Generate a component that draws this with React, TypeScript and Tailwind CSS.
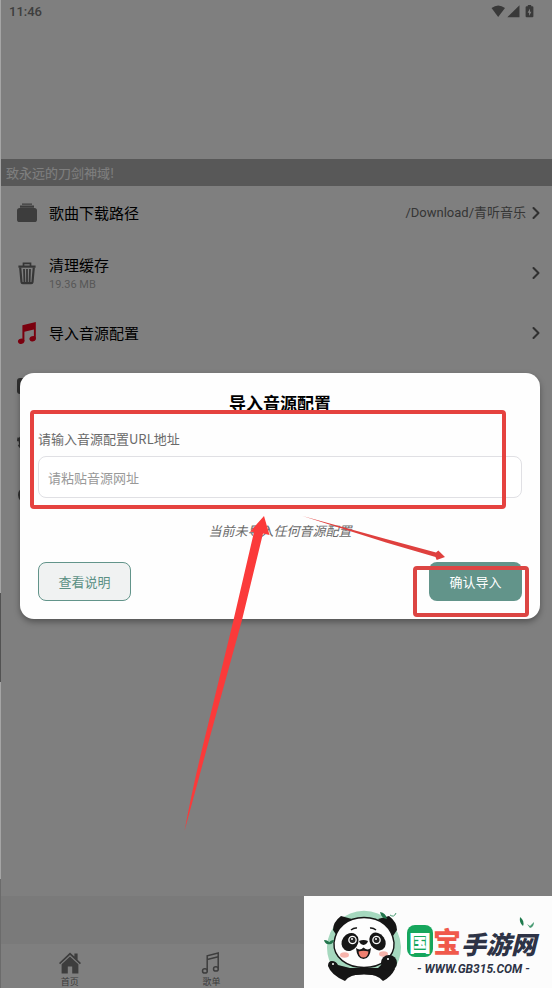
import React, { useState } from "react";
import { ChevronRight } from "lucide-react";

const FolderIcon = () => (
  <svg viewBox="0 0 20 20" className="h-5 w-5" fill="#7a7a7a">
    <path d="M5 .6h10v1.200H5zM3 2.600h14v2.200H3z" />
    <rect x="0" y="5" width="20" height="14" rx="2.600" />
  </svg>
);

const TrashIcon = () => (
  <svg viewBox="0 0 20 24" className="h-6 w-5" fill="none" stroke="#6c6c6c">
    <path d="M1.4 5.6h17.2" strokeWidth="2.2" />
    <path d="M6.5 5V2.4h7V5" strokeWidth="1.7" />
    <path d="M3.2 6.5 4.5 21.2q.1 1 1.2 1h8.6q1.1 0 1.2-1L16.8 6.5" strokeWidth="2.2" />
    <path d="M7 8l.4 13M10 8v13M13 8l-.4 13" strokeWidth="1.8" />
  </svg>
);

const ImportIcon = () => (
  <svg viewBox="0 0 20 24" className="h-6 w-5" fill="#f5001d">
    <path fillRule="evenodd" d="M5.400 4.200 18.800 1V17.400h-1.900V8.600L7.400 10.800V20H5.400z" />
    <ellipse cx="4.2" cy="20.2" rx="3.3" ry="2.6" transform="rotate(-18 4.2 20.2)" />
    <ellipse cx="15.7" cy="17.8" rx="3.3" ry="2.6" transform="rotate(-18 15.7 17.8)" />
  </svg>
);

const CardIcon = () => (
  <svg viewBox="0 0 20 20" className="h-5 w-5" fill="#606060">
    <rect x="0" y="1" width="20" height="16" rx="3" />
  </svg>
);

const GearIcon = () => (
  <svg viewBox="0 0 20 20" className="h-5 w-5" fill="none" stroke="#606060">
    <circle cx="10" cy="10" r="7" strokeWidth="3" />
    <circle cx="10" cy="10" r="8.5" strokeWidth="3" strokeDasharray="3.3 3.3" />
  </svg>
);

const AboutIcon = () => (
  <svg viewBox="0 0 20 20" className="h-5 w-5" fill="#606060">
    <circle cx="10" cy="10" r="9" />
  </svg>
);

const HomeIcon = () => (
  <svg viewBox="0 0 24 24" className="h-6 w-6 shrink-0" fill="#7a7a7a">
    <path d="M12 1.400 1 12l1.100 1.200L12 3.900l9.900 9.300L23 12l-3.400-3.300V2.600h-3.200v3z" />
    <path d="M12 5.400 3.600 13.200V22.400h6.200v-7h4.400v7h6.200v-9.200z" />
  </svg>
);

const SongsIcon = () => (
  <svg viewBox="0 0 24 24" className="h-6 w-6 shrink-0" fill="none" stroke="#7a7a7a" strokeWidth="1.5">
    <path d="M7.200 19.400V4.800L18.200 2V17.400M7.200 8.600 18.200 5.800" />
    <ellipse cx="4.900" cy="19.900" rx="2.400" ry="2.200" />
    <ellipse cx="15.900" cy="17.900" rx="2.400" ry="2.200" />
  </svg>
);

const rows = [
  { id: "path", title: "歌曲下载路径", value: "/Download/青听音乐", icon: FolderIcon, height: "h-[54px]" },
  { id: "cache", title: "清理缓存", sub: "19.36 MB", icon: TrashIcon, height: "h-[66px]" },
  { id: "import", title: "导入音源配置", icon: ImportIcon, height: "h-[54px]" },
  { id: "card", icon: CardIcon, height: "h-[54px]" },
  { id: "settings", icon: GearIcon, height: "h-[54px]" },
  { id: "about", icon: AboutIcon, height: "h-[54px]" },
];

const tabs = [
  { label: "首页", icon: HomeIcon },
  { label: "歌单", icon: SongsIcon },
];

const StatusBar = () => (
  <div className="flex h-6 items-center justify-between pl-2 pr-[18px] text-[#7c7c7c]">
    <span className="font-[Roboto,sans-serif] text-[13px] font-medium leading-6">11:46</span>
    <svg width="43" height="14" viewBox="0 0 43 14" fill="#727272">
      <path d="M.5 3Q7.2-2.2 14 3L7.2 12z" />
      <path d="M28.500.2V12.200H16.300z" />
      <path
        fillRule="evenodd"
        d="M36.800 0h3.400v1.300h1.200q1 0 1 1v9q0 1-1 1h-5.800q-1 0-1-1v-9q0-1 1-1h1.200zM39 3.400 36.600 7.800h1.500v3.200L40.400 6.800h-1.400z"
      />
    </svg>
  </div>
);

const Panda = () => (
  <svg width="82" height="78" viewBox="0 0 82 78" className="shrink-0">
    <path d="M14 66A37 37 0 1 1 70 66z" fill="#a5d8be" />
    <path d="M11 24q0-8 8-14l11 3L15 30zM75 24q0-8-8-14l-11 3 15 17z" fill="#151515" />
    <path d="M6 60q0-5 4-5 4 0 6 4l12 3h28l6-6 11 7q-4 8-12 12-6-7-19-7-14 0-19 7Q9 69 6 60z" fill="#151515" />
    <path
      d="M42 11.500c17 0 28 10 30 25 1 15-13 25-30 25s-31-10-30-25c2-15 13-25 30-25z"
      fill="#fdfdfd"
      stroke="#151515"
      strokeWidth="1.4"
    />
    <path d="M33 65q9-2 18 0 6 1 8 5-17-3-34 0 2-4 8-5z" fill="#151515" />
    <ellipse cx="28" cy="36" rx="8" ry="9.500" fill="#151515" transform="rotate(35 28 36)" />
    <ellipse cx="55.500" cy="35.500" rx="7.500" ry="9.500" fill="#151515" transform="rotate(-35 55.500 35.500)" />
    <circle cx="30.500" cy="34" r="4.300" fill="#fff" />
    <circle cx="54.500" cy="34" r="4.300" fill="#fff" />
    <circle cx="30.500" cy="34" r="3" fill="#222" />
    <circle cx="54.500" cy="34" r="3" fill="#222" />
    <circle cx="30" cy="33" r="1" fill="#fff" />
    <circle cx="54" cy="33" r="1" fill="#fff" />
    <path d="M29 24q3-2.500 6-2M48 22q3-.5 6 2" stroke="#151515" strokeWidth="1.500" fill="none" />
    <path d="M37 35q4.500-2 9 0-1 3.500-4.500 4-3.500-.5-4.500-4z" fill="#151515" />
    <path d="M34 42q4 3 7.500-.5 4 3.500 7.500.5-1 11-7.500 11T34 42z" fill="#151515" />
    <path d="M36.500 45.500q5-1.500 10 0-.5 6-5 6t-5-6z" fill="#f08070" />
    <ellipse cx="22.500" cy="49" rx="4.500" ry="2.800" fill="#f6b3ab" />
    <ellipse cx="61.500" cy="48" rx="4.500" ry="2.800" fill="#f6b3ab" />
    <circle cx="67" cy="57" r="8" fill="#151515" />
    <circle cx="11" cy="58" r="1" fill="#fff" />
    <circle cx="66" cy="53" r="1" fill="#fff" />
    <path d="M2 34q5 0 6 4-5 1-6-4zM6 38q2-4 6-4-1 5-6 4zM58 6q6 1 7 7-6-1-7-7z" fill="#23764d" />
    <path d="M68 9q4 3 6-2" fill="none" stroke="#4a9c74" />
  </svg>
);

const SiteBadge = () => (
  <a
    href="#gb315"
    className="absolute bottom-0 right-0 flex h-[92px] w-[248px] items-center overflow-hidden bg-[#fcfcfc] pl-[18px] pt-[6px]"
  >
    <Panda />
    <div className="flex flex-col pl-[3px] pt-3">
      <div className="flex h-8 items-end whitespace-nowrap font-black">
        <span className="flex h-8 w-[26px] items-center justify-center rounded-lg bg-[#16a65c] text-[22px] leading-8 text-white">
          国
        </span>
        <span className="text-[28px] leading-8 text-[#f0594b]">宝</span>
        <span className="text-[25px] italic leading-7 text-[#2d3346]">手游网</span>
      </div>
      <span className="mt-1 whitespace-nowrap pl-[10px] font-[Roboto,sans-serif] text-[12px] font-bold italic leading-4 text-[#2d3346]">
        - WWW.GB315.COM -
      </span>
    </div>
    <svg width="18" height="14" viewBox="0 0 18 14" className="absolute right-4 top-5">
      <path d="M2 1q5 4 3 9-4-3-3-9z" fill="#1f7a4d" />
      <path d="M9 8l3 2 4-4q0 5-4 6z" fill="#4a9c74" />
    </svg>
  </a>
);

const ImportDialog = () => {
  const [url, setUrl] = useState("");

  return (
    <div
      role="dialog"
      aria-labelledby="import-title"
      className="relative flex w-full flex-col rounded-[14px] bg-[#fefefe] px-[18px] pb-[18px] pt-[18px] shadow-[0_3px_6px_rgba(0,0,0,0.35)]"
    >
      <h2 id="import-title" className="text-center text-[17px] font-bold leading-6 text-black">
        导入音源配置
      </h2>
      <label htmlFor="source-url" className="mt-[14px] text-[13px] leading-5 text-[#6a6a6a]">
        请输入音源配置URL地址
      </label>
      <input
        id="source-url"
        type="text"
        value={url}
        onChange={(e) => setUrl(e.target.value)}
        placeholder="请粘贴音源网址"
        className="mt-[7px] h-[42px] w-full rounded-lg border border-[#e0e0e4] bg-white px-[9px] text-[13px] text-[#333] outline-none placeholder:text-[#999]"
      />
      <p className="mt-[23px] text-center text-[13px] italic leading-5 text-[#6a6a6a]">当前未导入任何音源配置</p>
      <div className="mt-[21px] flex justify-between">
        <button className="h-[39px] w-[93px] rounded-lg border border-[#62948a] bg-[#f0f2f2] text-[13px] text-[#5b9084]">
          查看说明
        </button>
        <button className="h-[39px] w-[93px] rounded-lg bg-[#62948a] text-[13px] text-white">确认导入</button>
      </div>

      {/* Tutorial marks */}
      <div className="pointer-events-none absolute left-[10px] right-[34px] top-[37px] h-[99px] rounded-[4px] border-4 border-[#e5423f]" />
      <div className="pointer-events-none absolute bottom-[2px] right-[11px] h-[51px] w-[116px] rounded-[4px] border-4 border-[#dc4543]" />
      <svg
        width="520"
        height="470"
        viewBox="0 0 520 470"
        className="pointer-events-none absolute left-0 top-0 max-w-none"
      >
        <path
          d="M244 143 249.500 162 243 160.500 222 247 191 360Q177 412 164.500 458 173 412 186 360L213.500 247 234 159 230 158.700z"
          fill="#fb3a3a"
        />
        <path d="M282.500 143 366 166 416 179.500 418.300 177.500 425 184 416.700 187 415.500 184 366 169.500z" fill="#df403e" />
      </svg>
    </div>
  );
};

const App = () => {
  return (
    <div className="relative flex min-h-screen overflow-hidden bg-white font-['Noto_Sans_CJK_SC',sans-serif]">
      <main className="flex min-w-0 flex-grow flex-col pl-px">
        <StatusBar />
        <div className="h-[135px]" />
        <div className="h-[27px] bg-[#b1b1b1] px-[5px] text-[13px] leading-[27px] text-white">致永远的刀剑神域!</div>

        <ul className="flex-grow">
          {rows.map(({ id, title, sub, value, height, icon: Icon }) => (
            <li key={id} className={`flex items-center gap-3 pl-4 pr-[6px] ${height}`}>
              <Icon />
              <div className={sub ? "flex flex-grow flex-col pt-1" : "flex flex-grow flex-col"}>
                <span className="text-[15px] leading-5 text-black">{title}</span>
                {sub && <span className="font-[Roboto,sans-serif] text-[11px] leading-5 text-[#b0b0b0]">{sub}</span>}
              </div>
              <div className="flex items-center">
                {value && (
                  <span className="font-[Roboto,'Noto_Sans_CJK_SC',sans-serif] text-[13px] leading-5 text-[#6c6c6c]">
                    {value}
                  </span>
                )}
                <ChevronRight className="h-5 w-5 text-[#606060]" strokeWidth={2.5} />
              </div>
            </li>
          ))}
        </ul>

        <div className="h-12 bg-[#f5f5f5]" />
        <nav className="flex h-11 gap-1 overflow-hidden pt-[7px]">
          {tabs.map(({ label, icon: Icon }) => (
            <a key={label} href="#tab" className="flex w-1/4 flex-col items-center text-[9px] leading-[13px] text-[#7a7a7a]">
              <Icon />
              {label}
            </a>
          ))}
        </nav>
      </main>

      {/* Dimmed backdrop with the dialog */}
      <div className="absolute inset-0 flex items-center bg-black/50 pl-5 pr-3 pt-1">
        <ImportDialog />
      </div>

      <div className="absolute inset-y-0 left-0 flex w-px flex-col">
        <div className="h-[60%] bg-[#a5a5a5]" />
        <div className="h-[9%] bg-[#525252]" />
        <div className="h-[20%] bg-[#a5a5a5]" />
        <div className="flex-grow bg-[#6b6b6b]" />
      </div>

      <SiteBadge />
    </div>
  );
};

export default App;
